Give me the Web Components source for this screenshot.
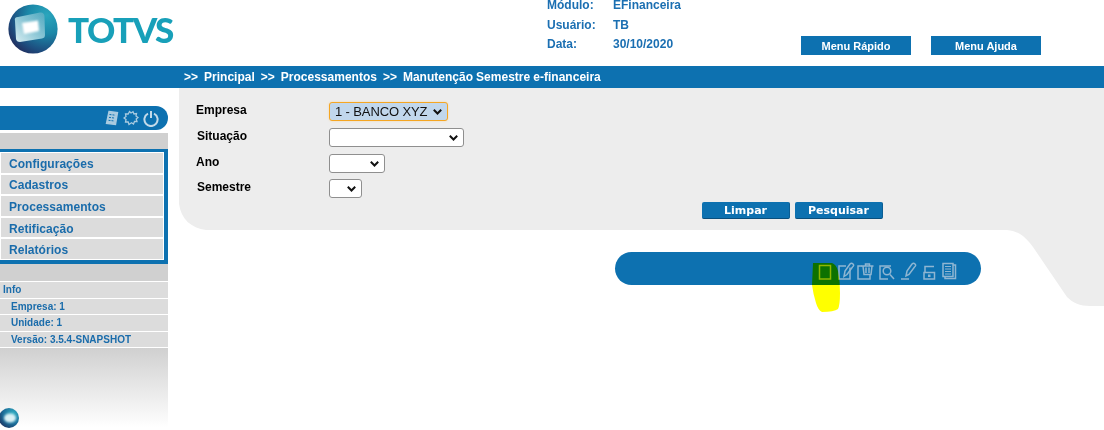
<!DOCTYPE html>
<html lang="pt">
<head>
<meta charset="utf-8">
<title>TOTVS</title>
<style>
html{background:#fff}
html,body{margin:0;padding:0}
body{width:1104px;height:430px;overflow:hidden;font:bold 12px "Liberation Sans",Arial,sans-serif;color:#0d71b0}
</style>
</head>
<body>
<app-shell>
  <app-header></app-header>
  <app-crumbs>&gt;&gt;  Principal  &gt;&gt;  Processamentos  &gt;&gt;  Manutenção Semestre e-financeira</app-crumbs>
  <app-main>
    <side-bar slot="side">
      <side-item>Configurações</side-item>
      <side-item>Cadastros</side-item>
      <side-item>Processamentos</side-item>
      <side-item>Retificação</side-item>
      <side-item>Relatórios</side-item>
      <info-row slot="info" head>Info</info-row>
      <info-row slot="info">Empresa: 1</info-row>
      <info-row slot="info">Unidade: 1</info-row>
      <info-row slot="info">Versão: 3.5.4-SNAPSHOT</info-row>
    </side-bar>
    <search-panel>
      <form-field label="Empresa" width="119" focus option="1 - BANCO XYZ" gap="7"></form-field>
      <form-field label="Situação" width="135" gap="7" shift="1"></form-field>
      <form-field label="Ano" width="56" gap="6"></form-field>
      <form-field label="Semestre" width="33" gap="4" shift="1"></form-field>
      <panel-button slot="actions">Limpar</panel-button>
      <panel-button slot="actions">Pesquisar</panel-button>
    </search-panel>
    <tool-bar slot="tools"></tool-bar>
  </app-main>
</app-shell>
<script>
class Base extends HTMLElement{
  constructor(){super();this.attachShadow({mode:'open'});}
  connectedCallback(){this.shadowRoot.innerHTML=this.render();}
}
const def=(n,render)=>customElements.define(n,class extends Base{render(){return render(this)}});

def('app-shell',()=>`<style>:host{display:flex;flex-direction:column;width:1104px;height:430px}</style><slot></slot>`);

def('app-logo',()=>`<style>
:host{display:flex;align-items:flex-start;width:547px;height:66px}
svg{display:block;flex:none;margin:4px 0 0 8px}
span{margin:9px 0 0 10px;font:900 35px/40px Lato,"Liberation Sans",sans-serif;color:#18a0b9;letter-spacing:-1.5px;filter:blur(.3px)}
</style>
<svg width="50" height="50" viewBox="0 0 50 50">
<defs>
<radialGradient id="g" cx=".78" cy=".22" r="1"><stop offset="0" stop-color="#2aa6bd"/><stop offset=".38" stop-color="#1b88a8"/><stop offset=".72" stop-color="#1d4f80"/><stop offset="1" stop-color="#231f4f"/></radialGradient>
<linearGradient id="w" x1="0" y1="1" x2="1" y2="0"><stop offset="0" stop-color="#d9eef2"/><stop offset=".5" stop-color="#8cc7d6"/><stop offset="1" stop-color="#4fa9c0"/></linearGradient>
<filter id="b" x="-20%" y="-20%" width="140%" height="140%"><feGaussianBlur stdDeviation=".7"/></filter>
<filter id="c" x="-30%" y="-30%" width="160%" height="160%"><feGaussianBlur stdDeviation="1.2"/></filter>
</defs>
<circle cx="25" cy="25" r="24.6" fill="url(#g)"/>
<path filter="url(#b)" d="M7 17Q6 13 10 13L32 8.500Q36 8 36.500 12L37 31Q37 34 34 34.500L12 38Q8.500 38 8 35Z" fill="url(#w)"/>
<path filter="url(#c)" d="M14 19L30 16.500 31 27 16 30Z" fill="#fff"/>
</svg><span>TOTVS</span>`);

def('info-pair',(e)=>`<style>:host{display:grid;grid-template-columns:66px auto;line-height:12px;color:#1b6fb2}</style><span>${e.getAttribute('k')}</span><span>${e.getAttribute('v')}</span>`);

def('menu-button',()=>`<style>:host{display:flex;align-items:center;justify-content:center;width:110px;height:19px;background:#0d71b0;color:#fff;font:bold 11px "Liberation Sans",sans-serif}</style><slot></slot>`);

def('app-header',()=>`<style>
:host{display:flex;flex:none;height:66px}
.info{display:grid;grid-auto-rows:12px;row-gap:7.5px;width:254px;margin-top:-1px;align-content:start}
.btns{display:flex;gap:20px;align-items:flex-start;padding-top:36px}
</style>
<app-logo></app-logo>
<div class="info">
<info-pair k="Módulo:" v="EFinanceira"></info-pair>
<info-pair k="Usuário:" v="TB"></info-pair>
<info-pair k="Data:" v="30/10/2020"></info-pair>
</div>
<div class="btns"><menu-button>Menu Rápido</menu-button><menu-button>Menu Ajuda</menu-button></div>`);

def('app-crumbs',()=>`<style>:host{display:block;flex:none;height:22px;box-sizing:border-box;padding-left:184px;background:#0d71b0;color:#fff;font:bold 12px/22px "Liberation Sans",sans-serif;white-space:pre;word-spacing:-.4px;letter-spacing:.02px}</style><slot></slot>`);

def('app-main',()=>`<style>
:host{display:flex;flex:1;position:relative;min-height:0;overflow:hidden}
.col{flex:1;min-width:0;display:flex;flex-direction:column;padding-left:11px}
</style>
<slot name="side"></slot>
<div class="col"><slot></slot><slot name="tools"></slot></div>`);

def('side-item',()=>`<style>:host{display:flex;align-items:center;padding:2px 0 0 8px;box-sizing:border-box;background:#dcdcdc;color:#1a6cab;font:bold 12px "Liberation Sans",sans-serif;letter-spacing:.05px}</style><slot></slot>`);

def('info-row',(e)=>`<style>:host{display:flex;align-items:center;height:15.5px;padding-left:${e.hasAttribute('head')?3:11}px;background:#dcdcdc;border-top:1px solid #fff;color:#1a6cab;font:bold 10px "Liberation Sans",sans-serif}</style><slot></slot>`);

def('side-bar',()=>`<style>
:host{display:flex;flex-direction:column;flex:none;width:168px;padding-top:18px;box-sizing:border-box;height:342px}
.pill{display:flex;align-items:center;justify-content:flex-end;gap:4px;flex:none;height:24px;padding-right:9px;background:#0d71b0;border-radius:0 12px 12px 0;margin-bottom:3px}
.pill svg{display:block;flex:none}
.gray{flex:none;background:#d0d0d0;padding:16px 0 17px}
.menu{display:grid;grid-auto-rows:1fr;gap:2px;height:106px;padding:1px;background:#fff;border:solid #0d71b0;border-width:3px 4px 4px 0}
.info{border-bottom:1px solid #fff;background:#d0d0d0}
.fade{flex:1;display:flex;align-items:flex-end;padding-bottom:2px;background:linear-gradient(#d0d0d0,#fff 97%)}
.fade svg{display:block}
</style>
<div class="pill">
<svg width="14" height="16" viewBox="0 0 14 16" fill="none" stroke="#a9cbe0" stroke-width="1.4"><path d="M4 1.5L12.5 2.5 10.5 14.5 1.5 13.5Z" fill="#a9cbe0"/><path d="M4.5 4.5L10.5 5.2M4 7.4L10 8.1M3.5 10.3L9.5 11" stroke="#0d71b0" stroke-width="1" stroke-dasharray="2 1"/></svg>
<svg width="16" height="16" viewBox="0 0 16 16" fill="none" stroke="#a9cbe0" stroke-width="1.3"><path d="M6.500 1.500L8 3 10 1.800 11 4 13.500 3.500 13 6 15 7.500 13.200 9 14 11.500 11.500 11.500 10.500 14 8.500 12.800 6 14.500 5.200 12 2.500 12 3 9.500 1 8 3 6.500 2.500 4 5.200 4Z"/></svg>
<svg width="16" height="17" viewBox="0 0 16 17" fill="none" stroke="#c3dae9" stroke-width="2"><path d="M5 3.6A6.6 6.6 0 1 0 11 3.6"/><path d="M8 1V8"/></svg>
</div>
<div class="gray"><div class="menu"><slot></slot></div></div>
<div class="info"><slot name="info"></slot></div>
<div class="fade"><svg width="20" height="20" viewBox="0 0 20 20"><defs><radialGradient id="s" cx=".7" cy=".3" r=".9"><stop offset="0" stop-color="#32b0c4"/><stop offset=".55" stop-color="#1a6c98"/><stop offset="1" stop-color="#1f2553"/></radialGradient><filter id="sb" x="-30%" y="-30%" width="160%" height="160%"><feGaussianBlur stdDeviation=".9"/></filter></defs><ellipse cx="9" cy="10" rx="10" ry="10" fill="url(#s)"/><ellipse filter="url(#sb)" cx="10" cy="10" rx="6" ry="4.500" fill="#d9f0f5"/></svg></div>`);

const arrow=`url("data:image/svg+xml,%3Csvg xmlns='http://www.w3.org/2000/svg' width='9' height='6'%3E%3Cpath d='M.8 .8L4.500 4.500 8.200 .8' fill='none' stroke='%23111' stroke-width='2'/%3E%3C/svg%3E")`;
def('form-field',(e)=>{
 const o=e.getAttribute('option')||'';const f=e.hasAttribute('focus');
 return `<style>
:host{display:grid;grid-template-columns:150px auto;align-items:start;margin-bottom:${e.getAttribute('gap')}px}
label{display:block;padding:1px 0 0 ${+(e.getAttribute('shift')||0)+17}px;color:#000;font:bold 12px/14px "Liberation Sans",sans-serif}
select{display:block;appearance:none;-webkit-appearance:none;box-sizing:border-box;width:${e.getAttribute('width')}px;height:19px;margin:0;padding:0 0 0 5px;background:${f?'#c1d7ec':'#fff'} ${arrow} no-repeat right 5px center;border:1px solid ${f?'#f5a623':'#8f8f8f'};border-radius:3px;font:13px "Liberation Sans",sans-serif;color:#111;letter-spacing:-.12px;${f?'box-shadow:0 0 2px #f8d59b;':''}outline:none}
</style><label>${e.getAttribute('label')}</label><select><option>${o}</option></select>`});

def('panel-button',()=>`<style>:host{display:flex;align-items:center;justify-content:center;box-sizing:border-box;width:88px;height:17px;background:#0d71b0;border-radius:2px;border-bottom:1px solid #0a4f7d;border-right:1px solid #0b5e94;color:#fff;font:bold 11px/15px "DejaVu Sans",Verdana,sans-serif}</style><slot></slot>`);

def('search-panel',()=>`<style>
:host{display:block;position:relative;isolation:isolate;flex:none;height:142px;box-sizing:border-box;padding-top:14px}
svg{position:absolute;left:0;top:0;z-index:-1}
.act{display:flex;gap:5px;margin:0 0 0 523px}
</style>
<svg width="925" height="218" viewBox="179 88 925 218"><path fill="#ededed" d="M179 88H1104V306H1090C1080 306 1073 303 1067 297L1033 247C1027 239 1020 231 1007 230H206C191 228 181 219 179 204Z"/></svg>
<slot></slot>
<div class="act"><slot name="actions"></slot></div>`);

const I={
 box:[20,'<rect x="1.5" y="13.5" width="11" height="13.5"/>'],
 edit:[19,'<path d="M12 15.5V27H1V14H8"/><path d="M6 24.5L7 19 12 12Q13.500 10.500 15 12T14.500 15L9 22.500Z"/>'],
 trash:[22,'<path d="M5 14H1V27H13V23"/><path d="M6 14L7 22.500H14L15 14M4.500 14H16.500M8.500 13.500V12H12.500V13.500M9 15.500V21M12 15.500V21"/>'],
 search:[22,'<path d="M12 14H1V27H9"/><circle cx="8" cy="19" r="3.800"/><path d="M11 22.500L15 27"/>'],
 pen:[22,'<path d="M0 27H8"/><path d="M5 24L6 19 11 12Q12.500 10.500 14 12T13.500 15L8 22.500Z"/>'],
 lock:[19,'<rect x="1" y="20.500" width="10.500" height="6.500"/><path d="M2 20V14.500H11"/><rect x="5" y="22.500" width="2.500" height="2.500" fill="#8fb6d2" stroke="none"/>'],
 docs:[16,'<path d="M1 11.500H11V24.500H1Z"/><path d="M11 13H13.500V26.500H3V24.500"/><path d="M3 14.500H9M3 17H9M3 19.500H9M3 22H9" stroke-width="1"/>']
};
def('tool-icon',(e)=>{const [w,p]=I[e.getAttribute('name')];return `<style>:host{display:block;flex:none;width:${w}px;height:33px}svg{display:block;overflow:visible}</style><svg width="${w}" height="33" viewBox="0 0 ${w} 33" fill="none" stroke="#8fb6d2" stroke-width="1.5">${p}</svg>`});

def('tool-bar',()=>`<style>
:host{display:flex;position:relative;box-sizing:border-box;width:366px;height:33px;margin:22px 0 0 436px;padding-left:203px;background:#0d71b0;border-radius:17px}
.mark{position:absolute;left:197px;top:11px;mix-blend-mode:multiply;display:block}
</style>
<tool-icon name="box"></tool-icon><tool-icon name="edit"></tool-icon><tool-icon name="trash"></tool-icon><tool-icon name="search"></tool-icon><tool-icon name="pen"></tool-icon><tool-icon name="lock"></tool-icon><tool-icon name="docs"></tool-icon>
<svg class="mark" width="28" height="49" viewBox="0 0 28 49"><path fill="#ff0" d="M1 0H20Q24 1 26 8 28 18 28 30 28 42 26 46 22 49 10 49 6 47 4 40 1 30 0 22Z"/></svg>`);
</script>
</body>
</html>
